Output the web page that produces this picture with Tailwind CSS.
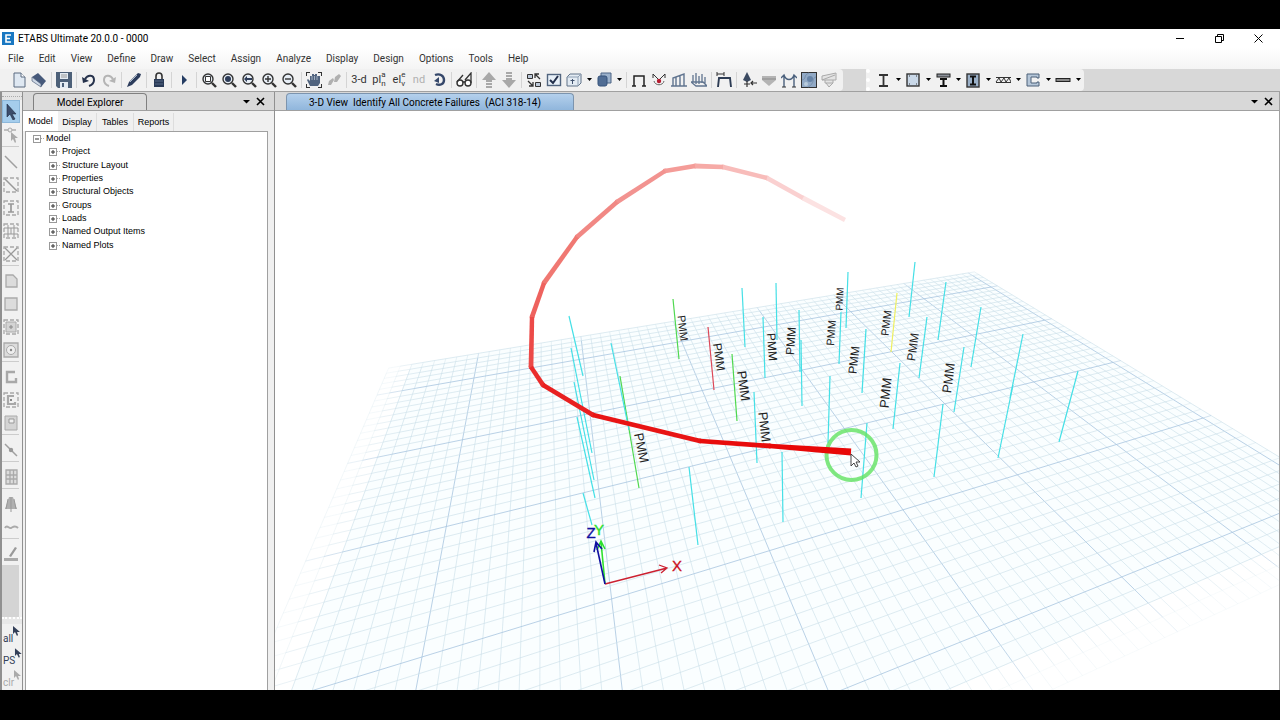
<!DOCTYPE html>
<html lang="en">
<head>
    <meta charset="UTF-8">
    <meta name="viewport" content="width=device-width, initial-scale=1.0">
    <title>ETABS Ultimate 20.0.0 - 0000</title>
    <script src="https://cdn.jsdelivr.net/npm/@tailwindcss/browser@4"></script>
</head>
<body class="h-screen flex flex-col bg-black pt-[29px] pb-[30px] overflow-hidden font-[Roboto,'Open_Sans',sans-serif] text-black">
    <!-- Title bar -->
    <header class="h-[19px] shrink-0 flex items-center bg-white pl-[2px] pr-[2px]">
        <svg class="w-3 h-[13px]" viewBox="0 0 12 13"><rect width="12" height="13" fill="#1a78c2"/><path d="M9 3H4v7h5M4 6.500h4" fill="none" stroke="#fff" stroke-width="1.600"/></svg>
        <h1 class="ml-1 text-[10px] leading-none">ETABS Ultimate 20.0.0 - 0000</h1>
        <div class="ml-auto flex">
            <button aria-label="Minimize" class="w-[39px] flex justify-center"><svg class="w-[9px] h-[9px]" viewBox="0 0 9 9"><path d="M0 4.500h8" stroke="#000"/></svg></button>
            <button aria-label="Restore" class="w-[39px] flex justify-center"><svg class="w-[9px] h-[9px]" viewBox="0 0 9 9"><path d="M.5 2.500h6v6h-6zM2.500 2.500v-2h6v6h-2" fill="none" stroke="#000"/></svg></button>
            <button aria-label="Close" class="w-[39px] flex justify-center"><svg class="w-[9px] h-[9px]" viewBox="0 0 9 9"><path d="M.5.5l8 8M8.500.5l-8 8" stroke="#000"/></svg></button>
        </div>
    </header>

    <!-- Menu -->
    <nav class="h-[21px] shrink-0 flex items-center gap-[15px] px-2 bg-linear-to-b from-white to-[#f4f4f4] text-[10px] leading-none text-[#333]">
        <a href="#">File</a><a href="#">Edit</a><a href="#">View</a><a href="#">Define</a><a href="#">Draw</a><a href="#">Select</a><a href="#">Assign</a><a href="#">Analyze</a><a href="#">Display</a><a href="#">Design</a><a href="#">Options</a><a href="#">Tools</a><a href="#">Help</a>
    </nav>

    <!-- Toolbar -->
    <div class="h-[23px] shrink-0 flex bg-[#d8d8d8] border-b border-[#a0a0a0]">
        <div id="main-tools" class="flex items-center bg-[#f1f1f1] rounded-r-sm pl-[9px] pr-1 pb-px"></div>
        <div class="w-[23px]"></div>
        <div id="frame-tools" class="flex items-center bg-[#f1f1f1] rounded-r-sm pl-[3px] pr-px pb-px border-l-4 border-dotted border-l-white"></div>
    </div>

    <div class="flex-1 min-h-0 flex bg-[#f0f0f0]">
        <!-- Draw tools -->
        <div class="w-[22px] shrink-0 flex flex-col border-l-2 border-[#909090] bg-[#f1f1f1]">
            <div class="h-2 flex items-start bg-[#e4e4e4]"><div class="w-full mt-1 border-t border-dotted border-[#aaa]"></div></div>
            <div id="draw-tools" class="flex flex-col"></div>
            <div class="flex-1 mr-[3px] bg-[#d4d4d4]"></div>
            <div class="h-[7px] border-t-2 border-dotted border-white bg-[#e8e8e8]"></div>
            <div id="select-tools" class="flex flex-col"></div>
        </div>

        <!-- Model Explorer -->
        <aside class="w-[253px] shrink-0 flex flex-col border-l border-r border-[#909090]">
            <div class="h-[19px] shrink-0 flex items-end bg-[#d8d8d8] border-b border-[#a0a0a0] pl-[10px] pr-[9px]">
                <h2 class="w-[114px] h-[17px] border border-b-0 border-[#808080] rounded-t-sm bg-[#dcdcdc] text-center text-[10px] leading-[17px]">Model Explorer</h2>
                <div class="ml-auto h-[17px] flex items-center gap-[5px]">
                    <button aria-label="Panel menu"><svg class="w-[9px] h-[9px]" viewBox="0 0 9 9"><path d="M1 3h7L4.500 6.500z"/></svg></button>
                    <button aria-label="Close panel"><svg class="w-[9px] h-[9px]" viewBox="0 0 9 9"><path d="M1 1l7 7M8 1L1 8" stroke="#000" stroke-width="1.600"/></svg></button>
                </div>
            </div>
            <div class="h-5 shrink-0 flex items-end font-['Liberation_Sans',sans-serif] text-[9px] leading-none">
                <button class="h-5 w-[35px] bg-white">Model</button>
                <button class="h-[18px] w-[39px] border-r border-[#ddd]">Display</button>
                <button class="h-[18px] w-[37px] border-r border-[#ddd]">Tables</button>
                <button class="h-[18px] w-10 border-r border-[#ddd]">Reports</button>
            </div>
            <div class="flex-1 flex mx-[2px] mr-[6px] bg-white border border-b-0 border-[#a0a0a0]">
                <ul id="tree" class="grid grid-rows-9 h-[120px] pl-[7px] font-['Liberation_Sans',sans-serif] text-[9px] leading-none"></ul>
            </div>
        </aside>

        <!-- 3D view -->
        <main class="flex-1 min-w-0 flex flex-col border-r border-[#a0a0a0]">
            <div class="h-[19px] shrink-0 flex items-end bg-[#d8d8d8] border-b border-[#a0a0a0] pl-[11px] pr-[6px]">
                <h2 class="w-[288px] h-[17px] border border-b-0 border-[#7c94ae] rounded-t-sm bg-linear-to-b from-[#b4d0ec] to-[#90b6dc] pl-[22px] text-[10px] leading-[17px] whitespace-pre">3-D View  Identify All Concrete Failures  (ACI 318-14)</h2>
                <div class="ml-auto h-[17px] flex items-center gap-[5px]">
                    <button aria-label="View menu"><svg class="w-[9px] h-[9px]" viewBox="0 0 9 9"><path d="M1 3h7L4.500 6.500z"/></svg></button>
                    <button aria-label="Close view"><svg class="w-[9px] h-[9px]" viewBox="0 0 9 9"><path d="M1 1l7 7M8 1L1 8" stroke="#000" stroke-width="1.600"/></svg></button>
                </div>
            </div>
            <div class="flex-1 min-h-0 bg-white">
                <svg id="scene" class="w-full h-full block font-['Liberation_Sans',sans-serif]" viewBox="275 111 1004 579" preserveAspectRatio="xMidYMid slice">
                    <g id="grid" fill="none"></g>
                    <g id="columns" fill="none" stroke-width="1.200"></g>
                    <g id="labels" fill="#222" text-anchor="middle"></g>

                    <!-- Axes -->
                    <g fill="none" stroke-width="1.300">
                        <path d="M605 584l-4-42M597 550l4-9 4 8" stroke="#2ee02e" stroke-width="1.600"/>
                        <path d="M605 584l62-16M659 565l8 3-6 5" stroke="#cc2030"/>
                        <path d="M605 584l-9-41M594 552l2-10 6 7" stroke="#1010a0" stroke-width="1.600"/>
                    </g>
                    <g font-size="15" text-anchor="middle">
                        <text x="599" y="535" fill="#2ee02e" stroke="#2ee02e" stroke-width=".4">Y</text>
                        <text x="591" y="538" fill="#1010a0" stroke="#1010a0" stroke-width=".4">Z</text>
                        <text x="677" y="571" fill="#cc1020" stroke="#cc1020" stroke-width=".3">X</text>
                    </g>

                    <circle cx="851.500" cy="455" r="25" fill="none" stroke="#62e262" stroke-opacity=".8" stroke-width="4"/>
                    <g id="trail"></g>
                    <path d="M851 454v12l3-3 2 4 2-1-2-4h4z" fill="#fff" stroke="#333" stroke-width=".9"/>
                </svg>
            </div>
        </main>
    </div>

    <script>
        const zoomGlass = '<circle cx="7" cy="7" r="5" fill="#e6edf5" stroke="#333" stroke-width="1.400"/><path d="M11 11l4 4" stroke="#333" stroke-width="2.400"/>';
        const caret = '<path d="M1 6h5L3.500 9z"/>';

        // name, drawing (16x16), 'sep' for a divider, 'drop' for a narrow arrow
        const mainTools = [
            ['New', '<path d="M3 1h7l4 4v10H3z" fill="#dfe8f2" stroke="#5b6b80"/><path d="M10 1v4h4" fill="#fff" stroke="#5b6b80"/>'],
            ['Open', '<path d="M1 5l6-4 8 8-5 6z" fill="#46597a"/><path d="M1 5v4l9 6v-3z" fill="#cfd9e6" stroke="#52627c" stroke-width=".7"/>'],
            'sep',
            ['Save', '<path d="M0 0h16v16H2l-2-2z" fill="#4d6078"/><path d="M4 1h8v6H4zM4 10h8v6H4z" fill="#e4ebf2"/><path d="M5 3h6M5 5h6" stroke="#999"/><path d="M6 11h2v4H6z" fill="#4d6078"/>'],
            'sep',
            ['Undo', '<path d="M4 7c3-5 9-4 9 1 0 3-2 5-5 6" fill="none" stroke="#26324c" stroke-width="2"/><path d="M1 5l1 6 6-2z" fill="#26324c"/>'],
            ['Redo', '<path d="M12 7C9 2 3 3 3 8c0 3 2 5 5 6" fill="none" stroke="#b4b4b4" stroke-width="2"/><path d="M15 5l-1 6-6-2z" fill="#b4b4b4"/>'],
            'sep',
            ['Edit', '<path d="M1 15l2-5 9-9 3 1-1 3-8 8z" fill="#2c3c5c"/><path d="M4 10l7-7" stroke="#a8b8cc"/>'],
            'sep',
            ['Lock', '<path d="M5 8V4c0-4 6-4 6 0v4" fill="none" stroke="#333" stroke-width="1.600"/><rect x="3" y="7" width="10" height="8" fill="#2a3b57"/><path d="M4 9h8M4 12h8" stroke="#7286a5" stroke-width=".6"/>'],
            'sep',
            ['Run', '<path d="M6 3v10l5-5z" fill="#253c63"/>'],
            'sep',
            ['Rubber band zoom', zoomGlass + '<path d="M4.500 4.500h5v5h-5z" fill="#fff" stroke="#333"/>'],
            ['Restore full view', zoomGlass + '<circle cx="7" cy="7" r="3" fill="#2d3c58"/>'],
            ['Previous zoom', zoomGlass + '<path d="M3 7l3-3v2h5v2H6v2z" fill="#2d3c58"/>'],
            ['Zoom in', zoomGlass + '<path d="M4 7h6M7 4v6" stroke="#333" stroke-width="1.400"/>'],
            ['Zoom out', zoomGlass + '<path d="M4 7h6" stroke="#333" stroke-width="1.400"/>'],
            'sep',
            ['Pan', '<path d="M0 4V0h4M12 0h4v4M16 12v4h-4M4 16H0v-4" fill="none" stroke="#333" stroke-width="2"/><path d="M4 14L1 8l1-1 2 2V4h2V2h2v1h1V2h2v2h3v7l-2 3z" fill="#51647f"/><path d="M6 4v4M8.500 4v4M11 4v4" stroke="#c4d0de" stroke-width=".7"/>'],
            ['Walk', '<path d="M2 13l1-4 4-3 1 2-3 5zM8 10l1-5 4-3 2 2-4 6z" fill="#b0b0b0"/>'],
            'sep',
            ['3-d', 'text:3-d:#333'],
            ['Plan', 'split:pl:a:n'],
            ['Elevation', 'split:el:e:v'],
            ['nd', 'text:nd:#b0b0b0'],
            ['Rotate', '<path d="M4 3c5-2 9 1 9 5s-4 6-8 4" fill="none" stroke="#35476a" stroke-width="2.400"/><path d="M8 5v6L3 9z" fill="#35476a"/>'],
            'sep',
            ['Perspective', '<circle cx="4" cy="11" r="3" fill="#fff" stroke="#333" stroke-width="1.400"/><circle cx="12" cy="11" r="3" fill="#fff" stroke="#333" stroke-width="1.400"/><path d="M1 10l6-7M9 8l6-7v10M7 10h2" fill="none" stroke="#333" stroke-width="1.300"/>'],
            'sep',
            ['Up', '<path d="M8 0l7 8h-4v2H5V8H1zM5 11h6v2H5zM5 14h6v2H5z" fill="#a8a8a8"/>'],
            ['Down', '<path d="M8 16l7-8h-4V6H5v2H1zM5 3h6v2H5zM5 0h6v2H5z" fill="#a8a8a8"/>'],
            'sep',
            ['Shrink', '<path d="M1.500 2.500h5v4h-5zM9.500 10.500h5v4h-5z" fill="#bcc8d8" stroke="#333"/><path d="M9 6V2h4M9 2l5 5M7 10v4H3M7 14L2 9" fill="none" stroke="#333" stroke-width="1.300"/>'],
            ['Display options', '<rect x="1.500" y="2.500" width="13" height="11" fill="#e8f0f8" stroke="#52657f" stroke-width="1.400"/><path d="M4 8l3 3 5-7" fill="none" stroke="#222f4b" stroke-width="2"/>'],
            ['Assigns', '<path d="M1 5l3-3h11v9l-3 3H1z" fill="#e3ebf3" stroke="#607288"/><path d="M1 5h11v9M12 5l3-3" stroke="#8fa0b4" fill="none"/><path d="M6.500 7v5M4.500 8.500h4" stroke="#41526e" fill="none"/>'],
            'drop',
            ['Extrude', '<path d="M5 1h10v10H5z" fill="#9cb2cc" stroke="#4c6485"/><rect x="2" y="4" width="9" height="10" rx="2" fill="#506d94" stroke="#34527b"/>'],
            'drop', 'sep',
            ['Portal', '<path d="M1 14h4M11 14h4M3 14V4h10v10" fill="none" stroke="#222" stroke-width="1.500"/>'],
            ['Joint loads', '<path d="M2 2l5 5M14 2L9 7M2 2v4M14 2v4" stroke="#333" fill="none"/><path d="M3 9c1 5 9 5 10 0" fill="none" stroke="#666"/><circle cx="8" cy="9" r="2.200" fill="#b51c30"/>'],
            ['Frame loads', '<path d="M0 14h16M2 14V6l11-4v12M5 14V5M9 14V4" fill="none" stroke="#60748f" stroke-width="1.400"/>'],
            ['Shell loads', '<path d="M0 10h12l4 4H5zM2 10V3M5 12V1M8 12V4M11 11V2M14 13V5" fill="none" stroke="#60748f" stroke-width="1.300"/>'],
            'sep',
            ['Deformed shape', '<path d="M1 2h7M1 0v4M8 0v4" stroke="#333"/><path d="M2 15l1-9h11l1 9M3 6h11" fill="none" stroke="#2d3c54" stroke-width="1.900"/>'],
            'sep',
            ['Reactions', '<path d="M6 0l4 8-4 2-4-2z" fill="#3b4a61"/><path d="M6 9v6M3 12h6M10 11h6M12 9l-2 2 2 2" fill="none" stroke="#333" stroke-width="1.200"/>'],
            ['Soil pressure', '<path d="M1 4h14v4l-7 6-7-6z" fill="#b4b4b4"/><path d="M1 7h14" stroke="#8b8b8b"/>'],
            ['Forces', '<path d="M3 15V4M13 15V4M0 6l3-3c2 6 8 6 10 0l3 3" fill="none" stroke="#4b617d" stroke-width="1.400"/><path d="M1 15h4M11 15h4" stroke="#333"/>'],
            ['Shell stresses', '<rect x=".5" y=".5" width="15" height="15" fill="#91a9c5" stroke="#333"/><path d="M1 8c5-1 1-5 7-7M15 5c-4 0-1 7-8 10" fill="none" stroke="#7890ac"/><circle cx="9" cy="7" r="3" fill="#6683a6"/><circle cx="5" cy="12" r="2" fill="#b9cbdc"/>'],
            ['Diagram', '<path d="M1 4l14-3v7H1zM4 8v3h8V8M5 11l3 4 4-4M1 8l13-5" fill="#e4e4e4" stroke="#aaa"/>'],
        ];
        const frameTools = [
            ['I section', '<path d="M4 3h9M4 14h9M8.500 3v11" stroke="#333" stroke-width="1.800"/>'], 'drop',
            ['Column', '<rect x="2" y="2" width="12" height="12" fill="#c9d8e8" stroke="#333" stroke-width="1.400"/><path d="M4 4h1M11 4h1M4 12h1M11 12h1" stroke="#333"/>'], 'drop',
            ['Composite beam', '<rect x="2" y="2" width="13" height="3" fill="#8d929b" stroke="#222"/><path d="M5 7h7M5 14h7M8.500 7v7" stroke="#111" stroke-width="2"/>'], 'drop',
            ['Composite column', '<rect x="2" y="2" width="12" height="13" fill="#9ab0c8" stroke="#333" stroke-width="1.400"/><path d="M5 4.500h6M5 12.500h6M8 4v9" stroke="#111" stroke-width="2"/>'], 'drop',
            ['Joist', '<path d="M1 5.500h15M1 10.500h15M1 10l3-4 2 4 3-4 2 4 3-4 2 4" fill="none" stroke="#333"/>'], 'drop',
            ['Wall', '<path d="M2 2h12v4h-2V5H6v6h6v-1h2v4H2z" fill="#b5c6d8" stroke="#4c6078"/>'], 'drop',
            ['Slab', '<rect x="1" y="6.500" width="14" height="3" fill="#888" stroke="#222"/>'], 'drop',
        ];

        function toolIcon(art, size) {
            if (art.startsWith('text:')) {
                const [, label, color] = art.split(':');
                return `<span class="text-[11px] leading-none" style="color:${color}">${label}</span>`;
            }
            if (art.startsWith('split:')) {
                const [, left, top, bottom] = art.split(':');
                return `<span class="flex items-center text-[11px] leading-none text-[#333]">${left}<span class="flex flex-col text-[8px] leading-[9px] pb-px"><span>${top}</span><span>${bottom}</span></span></span>`;
            }
            return `<svg class="${size}" viewBox="0 0 16 16">${art}</svg>`;
        }
        function toolbar(id, tools) {
            document.getElementById(id).innerHTML = tools.map(t => {
                if (t === 'sep') return '<span class="w-[5px] h-4 flex justify-center"><span class="w-px bg-[#d4d4d4]"></span></span>';
                if (t === 'drop') return `<button aria-label="More" class="w-[10px] flex justify-center"><svg class="w-[7px] h-4" viewBox="0 0 7 16">${caret}</svg></button>`;
                return `<button aria-label="${t[0]}" class="w-5 h-5 flex items-center justify-center">${toolIcon(t[1], 'w-4 h-4')}</button>`;
            }).join('');
        }
        toolbar('main-tools', mainTools);
        toolbar('frame-tools', frameTools);

        const dashed = '<rect x="1" y="1" width="14" height="14" fill="none" stroke="#a8a8a8" stroke-width="1.300" stroke-dasharray="4 2"/>';
        const drawTools = [
            ['Select', '<path d="M4 0v13l3-3 3 6 2-1-3-5h4z" fill="#3c4d6b" stroke="#1e2b44" stroke-width=".6"/>', true],
            ['Reshape', '<path d="M1 3h12" stroke="#aaa" stroke-width="1.400"/><circle cx="7" cy="3" r="2" fill="#eee" stroke="#aaa"/><path d="M8 5v9l2-2 2 4 1-1-1-4h3z" fill="#aaa"/>'],
            'sep',
            ['Draw line', '<path d="M2 2l12 12" stroke="#a0a0a0" stroke-width="1.500"/>'],
            ['Quick line', dashed + '<path d="M2 2l12 12" stroke="#999" stroke-width="1.500"/>'],
            ['Quick column', dashed + '<path d="M5 4h6M5 12h6M8 4v8" stroke="#999" stroke-width="1.700"/>'],
            ['Secondary beams', dashed + '<path d="M1 5h14M1 11h14M5 2v12M11 2v12M8 5v6" stroke="#999"/>'],
            ['Braces', dashed + '<path d="M2 2l12 12M14 2L2 14" stroke="#999" stroke-width="1.300"/>'],
            'sep',
            ['Draw floor', '<path d="M3 2h7l4 4v8H3z" fill="#dcdcdc" stroke="#aaa" stroke-width="1.300"/>'],
            ['Rectangular floor', '<path d="M2 2h12v12H2z" fill="#dcdcdc" stroke="#aaa" stroke-width="1.300"/>'],
            ['Quick floor', dashed + '<path d="M3 3h10v10H3z" fill="#d4d4d4" stroke="#aaa"/><path d="M8 6v4M6 8h4" stroke="#888"/>'],
            ['Floor around point', '<path d="M1 1h14v14H1z" fill="#dcdcdc" stroke="#aaa" stroke-width="1.300"/><circle cx="8" cy="8" r="4.500" fill="#eee" stroke="#aaa"/><circle cx="8" cy="8" r="1.200" fill="#888"/>'],
            'sep',
            ['Draw wall', '<path d="M12 3H4v10h9V9" fill="none" stroke="#a8a8a8" stroke-width="2.400"/>'],
            ['Quick wall', dashed + '<path d="M11 4H5v8h7v-2" fill="none" stroke="#a8a8a8" stroke-width="2.200"/><path d="M8 7v2" stroke="#888" stroke-width="2"/>'],
            ['Wall opening', '<path d="M2 1h12v14H2z" fill="#d4d4d4" stroke="#aaa"/><path d="M6 4h5v4H6z" fill="#f0f0f0" stroke="#999"/>'],
            'sep',
            ['Draw link', '<path d="M2 2l12 12" stroke="#a0a0a0" stroke-width="1.500"/><circle cx="8" cy="8" r="2.200" fill="#999"/>'],
            'sep',
            ['Grid', '<path d="M3 1h11v14H3zM3 6h11M3 10h11M7 1v14M10.500 1v14" fill="#ddd" stroke="#aaa" stroke-width="1.300"/>'],
            'sep',
            ['Elevation stack', '<path d="M6 1h4l4 12H2z" fill="#b0b0b0"/><path d="M8 1v15M5 3L3 13M11 3l2 10" stroke="#999"/>'],
            ['Tendon', '<path d="M2 9c2-4 4 1 6 0s4-3 7 0" fill="none" stroke="#aaa" stroke-width="2"/>'],
            'sep',
            ['Strip', '<path d="M6 10l6-9 2 1-6 9z" fill="#999"/><path d="M1 13.500h14" stroke="#aaa" stroke-width="3"/>'],
        ];
        document.getElementById('draw-tools').innerHTML = drawTools.map(t => {
            if (t === 'sep') return '<span class="h-1 w-[17px] border-t border-[#ccc]"></span>';
            const active = t[2] ? 'bg-[#a5cdec] border-[#8db8da]' : 'border-transparent';
            return `<button aria-label="${t[0]}" class="h-[23px] w-[18px] border flex items-center justify-center ${active}">${toolIcon(t[1], 'w-4 h-4')}</button>`;
        }).join('');

        const cursorArt = '<path d="M1 0v8l2-2 2 4 1-1-1-3h3z" fill="currentColor"/>';
        document.getElementById('select-tools').innerHTML = [
            ['all', 'text-[#333f58]'], ['PS', 'text-[#333f58]'], ['clr', 'text-[#aaa]'],
        ].map(([label, color]) =>
            `<button class="h-[22px] flex items-center pl-px text-[10px] leading-none ${color}"><span class="pt-2">${label}</span><svg class="w-2 h-[10px] -ml-px -mt-2" viewBox="0 0 8 10">${cursorArt}</svg></button>`
        ).join('');

        // Model tree
        const branches = ['Project', 'Structure Layout', 'Properties', 'Structural Objects', 'Groups', 'Loads', 'Named Output Items', 'Named Plots'];
        const box = sign => `<svg class="w-[12px] h-[13px] shrink-0" viewBox="0 0 12 13"><path d="M8 6.500h4" stroke="#aaa" stroke-dasharray="1 1"/><rect x=".5" y="3.500" width="7" height="7" fill="#fff" stroke="#999"/><path d="${sign}" stroke="#333"/></svg>`;
        document.getElementById('tree').innerHTML =
            `<li class="flex items-center gap-px">${box('M2 7h4')}Model</li>` +
            branches.map(b => `<li class="flex items-center gap-px pl-4">${box('M2 7h4M4 5v4')}${b}</li>`).join('');

        // Ground grid: project plan coordinates (bays) onto the screen
        const quad = [[422, 657], [1203, 418], [991, 287], [474, 378]];
        const [p0, p1, p2, p3] = quad;
        const dx1 = p1[0] - p2[0], dx2 = p3[0] - p2[0], sx = p0[0] - p1[0] + p2[0] - p3[0];
        const dy1 = p1[1] - p2[1], dy2 = p3[1] - p2[1], sy = p0[1] - p1[1] + p2[1] - p3[1];
        const det = dx1 * dy2 - dx2 * dy1;
        const g = (sx * dy2 - dx2 * sy) / det, h = (dx1 * sy - sx * dy1) / det;
        function project(u, v) {
            const s = u / 6, t = (v - 1) / 3, w = g * s + h * t + 1;
            return [
                ((p1[0] - p0[0] + g * p1[0]) * s + (p3[0] - p0[0] + h * p3[0]) * t + p0[0]) / w,
                ((p1[1] - p0[1] + g * p1[1]) * s + (p3[1] - p0[1] + h * p3[1]) * t + p0[1]) / w,
            ].map(n => n.toFixed(1)).join(' ');
        }
        const uMin = -0.8, uMax = 6.1, vMin = -0.4, vMax = 4.5;
        const tint = [[uMin + .2, vMin + .2], [uMax, vMin + .2], [uMax, vMax], [uMin + .2, vMax]].map(p => project(...p)).join('L');
        let lines = `<path d="M${tint}z" fill="#e8fbff" fill-opacity=".2"/>`;
        function gridLine(at, from, to, major, fade) {
            const color = major ? '#a9c6e0' : '#cbdfe9';
            const stops = [[from, .25], [from + .1, .5], [from + .2, .7], [from + .3, .8], [to - .1, .5], [to, 0]];
            for (let i = 0; i < stops.length - 1; i++) {
                lines += `<path d="M${at(stops[i][0])}L${at(stops[i + 1][0])}" stroke="${color}" stroke-width="${major ? 1 : .8}" stroke-opacity="${stops[i][1] * fade}"/>`;
            }
        }
        for (let i = Math.round(uMin * 10); i <= uMax * 10; i++) gridLine(t => project(i / 10, t), vMin, vMax, i % 10 === 0, i < -6 ? .4 : 1);
        for (let i = Math.round(vMin * 10); i <= vMax * 10; i++) gridLine(t => project(t, i / 10), uMin, uMax, i % 10 === 0, i < -2 ? .2 : 1);
        document.getElementById('grid').innerHTML = lines;

        // Frame columns: x1, y1, x2, y2, colour
        const cyan = '#45e0e6', green = '#4fd84f';
        const columns = [
            [569, 316, 583, 376], [571, 348, 592, 453], [574, 382, 594, 480], [577, 417, 595, 498], [583, 493, 592, 525],
            [620, 376, 639, 488, green], [611, 343, 629, 430], [673, 299, 679, 359, green], [708, 327, 714, 390, '#dc4858'],
            [732, 354, 737, 421, green], [742, 288, 745, 347], [763, 317, 765, 378], [754, 392, 757, 463], [689, 467, 698, 545],
            [776, 283, 777, 340], [799, 310, 800, 372], [801, 340, 802, 406], [848, 272, 846, 328], [841, 312, 839, 364],
            [915, 262, 909, 317], [946, 282, 938, 340], [981, 307, 971, 367], [1023, 334, 1010, 398], [1013, 385, 998, 458],
            [1078, 371, 1059, 442], [927, 317, 919, 378], [964, 347, 954, 412], [943, 404, 934, 477], [900, 363, 893, 429],
            [866, 329, 862, 393], [830, 376, 828, 443], [867, 423, 861, 498], [782, 452, 783, 522], [897, 293, 891, 352, '#eef060'],
        ];
        document.getElementById('columns').innerHTML = columns.map(([x1, y1, x2, y2, c]) =>
            `<path d="M${x1} ${y1}L${x2} ${y2}" stroke="${c || cyan}"/>`).join('');

        // Interaction labels: x, y, angle, size
        const labels = [
            [683, 328, 83, 11], [719, 357, 82, 12], [743, 386, 82, 13], [764, 427, 83, 13], [641, 448, 78, 13],
            [772, 347, 86, 12], [791, 341, -86, 12], [839, 299, -87, 10], [831, 333, -86, 11], [854, 360, -84, 12],
            [886, 323, -83, 11], [913, 347, -82, 12], [886, 393, -84, 13], [949, 378, -83, 13],
        ];
        document.getElementById('labels').innerHTML = labels.map(([x, y, a, s]) =>
            `<text transform="translate(${x} ${y}) rotate(${a})" y="4" font-size="${s}">PMM</text>`).join('');

        // Pointer trail, oldest first: x, y, colour; every piece widens towards its newer end
        const trail = [
            [845, 220], [803, 198, '#fce2e2'], [767, 178, '#fad0d0'], [723, 167, '#f8bcba'], [695, 166, '#f6aaa6'],
            [665, 171, '#f49c98'], [617, 202, '#f29390'], [577, 237, '#f18884'], [544, 283, '#f07872'],
            [532, 317, '#ee625e'], [531, 367, '#ec4a48'], [543, 385, '#ea2c2c'], [593, 415, '#e82020'],
            [700, 441, '#e81414'], [770, 446, '#e80c0c'], [851, 452, '#e80808'],
        ];
        document.getElementById('trail').innerHTML = trail.slice(1).map(([x, y, c], i) => {
            const [px, py] = trail[i], len = Math.hypot(x - px, y - py);
            const nx = -(y - py) / len, ny = (x - px) / len;
            const last = i === trail.length - 2;
            const a = 2.2, b = last ? 3.4 : 2.4;
            const joint = last ? '' : `<circle cx="${x}" cy="${y}" r="${b}" fill="${c}"/>`;
            return `<path d="M${px + nx * a} ${py + ny * a}L${x + nx * b} ${y + ny * b}L${x - nx * b} ${y - ny * b}L${px - nx * a} ${py - ny * a}z" fill="${c}"/>${joint}`;
        }).join('');
    </script>
</body>
</html>
